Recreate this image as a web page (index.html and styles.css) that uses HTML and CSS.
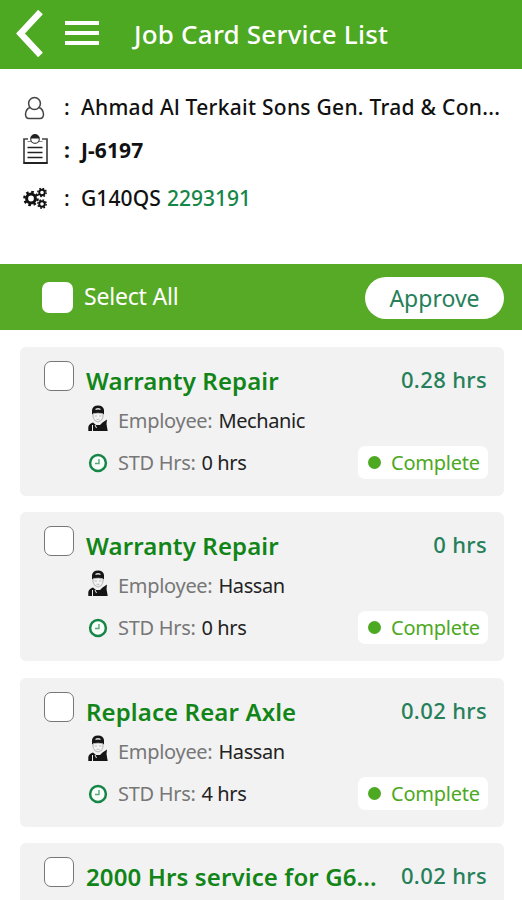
FILE: index.html
```html
<!DOCTYPE html>
<html lang="en">
<head>
<meta charset="utf-8">
<title>Job Card Service List</title>
<link rel="stylesheet" href="styles.css">
</head>
<body>
<svg class="sprite" aria-hidden="true">
  <symbol id="mechanic" viewBox="0 0 20 27">
    <path d="M4 9.500V5Q4.500 .6 10 .4Q15.500 .6 16 5V9.500L14 8.200H6L4 9.500Z" fill="#151515"/>
    <path d="M7.500 4.500Q10 3 12.500 4.500" stroke="#ddd" stroke-width="1.300" fill="none"/>
    <path d="M5 8.800Q10 7.300 15 8.800V12Q14 16.500 10 17Q6 16.500 5 12Z" fill="#f5f5f5" stroke="#999" stroke-width=".7"/>
    <path d="M6.500 11H9M11 11H13.500M8.500 14.300H11.500" stroke="#aaa" stroke-width=".8"/>
    <path d="M.3 26V22Q1 18.500 5 17.500L8 20H12L14.500 17.500L19 14.500L18.500 19L19.700 26Z" fill="#151515"/>
    <path d="M4.500 20V26M7 20L8.500 23" stroke="#eee" stroke-width="1"/>
  </symbol>
  <symbol id="clock" viewBox="0 0 20 20">
    <circle cx="10" cy="10" r="7.900" fill="#f8fffa" stroke="#168548" stroke-width="2.500"/>
    <path d="M11 6V10.500H7" fill="none" stroke="#5aa57c" stroke-width="1.400"/>
  </symbol>
  <symbol id="gear" viewBox="-10 -10 20 20">
    <circle r="5.500" fill="none" stroke="#111" stroke-width="3.800"/>
    <circle r="8.300" fill="none" stroke="#111" stroke-width="3" stroke-dasharray="3.260"/>
  </symbol>
</svg>

<header class="topbar">
  <svg class="back" viewBox="0 0 28 48"><path d="M24.500 2L4.500 23.500L24.500 45" fill="none" stroke="#fff" stroke-width="6.500"/></svg>
  <div class="menu"><i></i><i></i><i></i></div>
  <h1>Job Card Service List</h1>
</header>

<section class="info">
  <div class="info-row">
    <svg class="info-icon" viewBox="0 0 28 32" fill="#fff" stroke="#444" stroke-width="1.500">
      <path d="M9 16.500Q5 18 4.500 23Q4.500 27.500 8 27.500H19Q22.500 27.500 22.500 23Q22 18 18 16.500"/>
      <circle cx="13.500" cy="12.500" r="5.900"/>
    </svg>
    <span class="colon">:</span><span class="customer">Ahmad Al Terkait Sons Gen. Trad &amp; Con...</span>
  </div>
  <div class="info-row job">
    <svg class="info-icon" viewBox="0 0 28 32" fill="none" stroke="#222">
      <path d="M7 5H3V29H26V5H21" stroke="#444" stroke-width="1.700"/>
      <path d="M2.500 29H26.500" stroke-width="2"/>
      <path d="M6.500 7.500H10M18 7.500H21.500" stroke="#888"/>
      <circle cx="14" cy="5" r="4.300" stroke="#444" stroke-width="1.200"/><path d="M10 4Q11 .8 14 .8T18 4Z" fill="#222"/>
      <path d="M6.500 13.500H21.500M6.500 18.500H21.500M6.500 23.500H21.500" stroke-width="1.600"/>
    </svg>
    <span class="colon">:</span><span class="job-no">J-6197</span>
  </div>
  <div class="info-row machine">
    <svg class="info-icon" viewBox="0 0 28 32">
      <use href="#gear" x="2" y="8.500" width="16" height="16"/>
      <use href="#gear" x="16" y="5.500" width="10" height="10"/>
      <use href="#gear" x="16" y="17" width="10" height="10"/>
    </svg>
    <span class="colon">:</span><span class="model">G140QS</span><span class="serial">2293191</span>
  </div>
</section>

<section class="actions">
  <span class="check check-all"></span>
  <span class="select-all">Select All</span>
  <button class="approve">Approve</button>
</section>

<main class="list">
  <article class="card">
    <span class="check"></span>
    <div class="body">
      <div class="head"><h2>Warranty Repair</h2><span class="hours">0.28 hrs</span></div>
      <div class="employee"><svg class="mech"><use href="#mechanic"/></svg><span class="label">Employee:</span><span class="value">Mechanic</span></div>
      <div class="std"><svg class="clock"><use href="#clock"/></svg><span class="label">STD Hrs:</span><span class="value">0 hrs</span><span class="status"><i></i>Complete</span></div>
    </div>
  </article>
  <article class="card">
    <span class="check"></span>
    <div class="body">
      <div class="head"><h2>Warranty Repair</h2><span class="hours">0 hrs</span></div>
      <div class="employee"><svg class="mech"><use href="#mechanic"/></svg><span class="label">Employee:</span><span class="value">Hassan</span></div>
      <div class="std"><svg class="clock"><use href="#clock"/></svg><span class="label">STD Hrs:</span><span class="value">0 hrs</span><span class="status"><i></i>Complete</span></div>
    </div>
  </article>
  <article class="card">
    <span class="check"></span>
    <div class="body">
      <div class="head"><h2>Replace Rear Axle</h2><span class="hours">0.02 hrs</span></div>
      <div class="employee"><svg class="mech"><use href="#mechanic"/></svg><span class="label">Employee:</span><span class="value">Hassan</span></div>
      <div class="std"><svg class="clock"><use href="#clock"/></svg><span class="label">STD Hrs:</span><span class="value">4 hrs</span><span class="status"><i></i>Complete</span></div>
    </div>
  </article>
  <article class="card card-last">
    <span class="check"></span>
    <div class="body">
      <div class="head"><h2>2000 Hrs service for G6...</h2><span class="hours">0.02 hrs</span></div>
    </div>
  </article>
</main>
</body>
</html>
```

FILE: styles.css
```css
* { box-sizing: border-box; }
html, body { margin: 0; height: 900px; overflow: hidden; }
body {
  background: #fff;
  font-family: "Noto Sans", "Open Sans", sans-serif;
  font-size: 20px;
  color: #111;
  white-space: nowrap;
}
.sprite { display: none; }
svg { display: block; flex: none; }
h1, h2 { margin: 0; }

.topbar {
  height: 69px;
  background: #4da822;
  color: #fff;
  display: flex;
  align-items: flex-start;
  padding-left: 16px;
}
.back { width: 28px; height: 48px; margin-top: 10px; }
.menu { width: 34px; margin: 21px 35px 0 21px; display: grid; gap: 6px; }
.menu i { height: 4px; background: #fff; }
.topbar h1 { font-size: 26px; font-weight: 500; line-height: 36px; margin-top: 16px; letter-spacing: .2px; }

.info { height: 195px; padding: 22px 0 0 21px; }
.info-row { height: 32px; display: flex; align-items: center; font-size: 21px; font-weight: 500; }
.info-row.job { margin-top: 11px; font-weight: 700; letter-spacing: .1px; }
.info-row.machine { margin-top: 16px; }
.info-icon { width: 28px; height: 32px; }
.colon { width: 17px; margin-left: 15px; }
.info-row span { margin-top: -1px; }
.customer { letter-spacing: .27px; }
.model { letter-spacing: .1px; }
.serial { color: #168548; margin-left: 6px; }

.actions {
  height: 66px;
  background: #57aa25;
  display: flex;
  align-items: center;
  padding: 0 18px 0 42px;
}
.check {
  width: 30px;
  height: 30px;
  flex: none;
  border: 1.500px solid #777;
  border-radius: 7px;
  background: #fff;
}
.check-all { border: 0; width: 31px; height: 31px; margin-top: 1px; }
.select-all { color: #fff; font-size: 23px; margin: -2px 0 0 11px; letter-spacing: -.2px; }
.approve {
  margin: 2px 0 0 auto;
  width: 139px;
  height: 42px;
  padding: 0;
  border: 0;
  border-radius: 21px;
  background: #fff;
  color: #25805a;
  font: 400 23px/41px "Noto Sans", "Open Sans", sans-serif;
}

.list { height: 570px; overflow: hidden; padding: 17px 18px 0 20px; display: grid; align-content: start; gap: 16.300px; }
.card {
  height: 149px;
  background: #f2f2f2;
  border-radius: 6px;
  display: flex;
  padding: 14px 17px 0 24px;
}
.card-last { height: 57px; border-radius: 6px 6px 0 0; }
.body { flex: 1; margin-left: 12px; }
.head { display: flex; justify-content: space-between; height: 40px; }
.head h2 { color: #118517; font-size: 24px; font-weight: 600; line-height: 40px; letter-spacing: .12px; }
.hours { color: #25805a; font-size: 22px; font-weight: 500; line-height: 37px; letter-spacing: .35px; }
.employee { display: flex; align-items: center; height: 40px; }
.employee span { margin-top: -1px; }
.mech { width: 20px; height: 27px; margin: -6px 10px 0 2px; }
.clock { width: 20px; height: 20px; margin: 1px 10px 0 2px; }
.label { color: #777; letter-spacing: -.3px; }
.value { color: #222; margin-left: 6px; letter-spacing: -.4px; }
.std { display: flex; align-items: center; height: 43px; }
.status {
  margin: 0 -1px 0 auto;
  width: 130px;
  height: 33px;
  border-radius: 7px;
  background: #fff;
  color: #4da822;
  display: flex;
  align-items: center;
  padding-left: 10px;
  letter-spacing: -.25px;
}
.status i { width: 13px; height: 13px; border-radius: 50%; background: #4da822; margin-right: 10px; }
```
